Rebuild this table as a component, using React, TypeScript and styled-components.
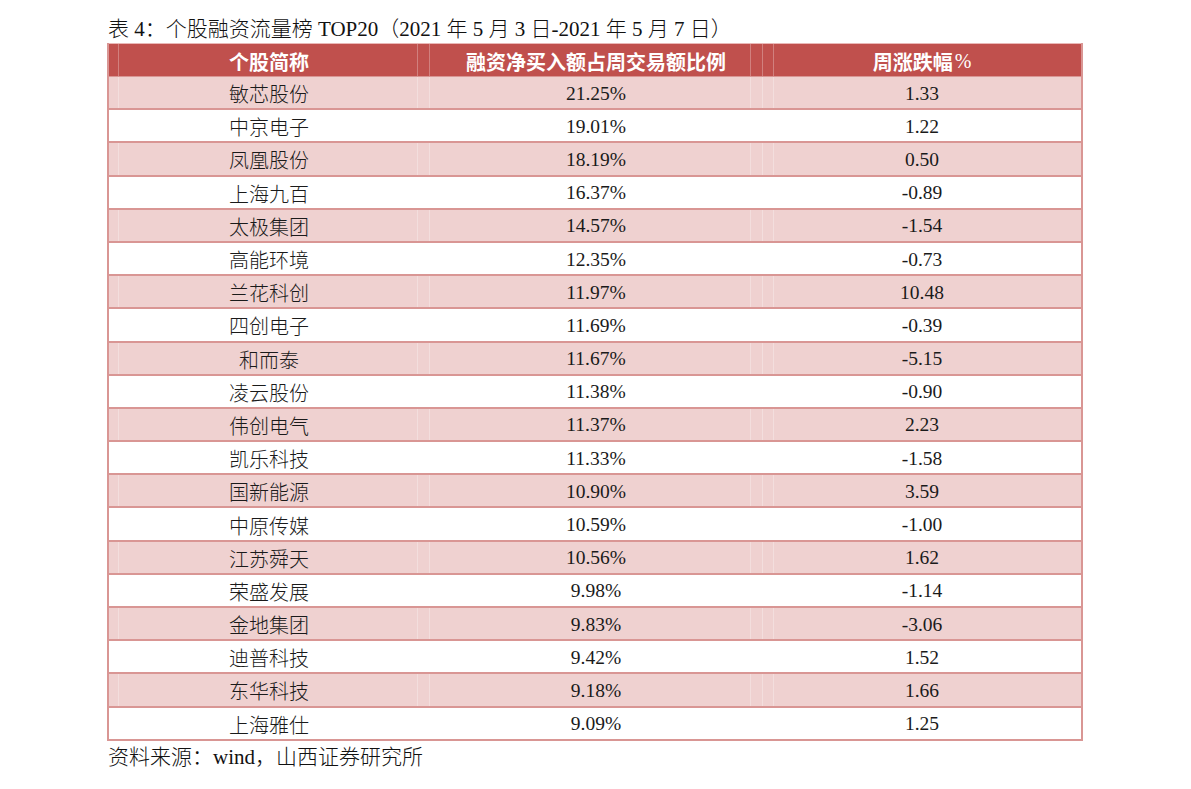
import React from "react";
import styled, { createGlobalStyle } from "styled-components";

const GlobalStyle = createGlobalStyle`
  html, body {
    margin: 0;
    padding: 0;
    background: #ffffff;
  }
  body {
    font-family: "Liberation Serif", "Noto Sans CJK SC", serif;
    color: #111111;
  }
`;

const Page = styled.div`
  display: flex;
  flex-direction: column;
  padding: 15px 0 0 107px;
  width: 976px;
`;

const Title = styled.div`
  height: 28px;
  line-height: 28px;
  font-size: 21px;
  font-weight: 300;
  padding-left: 1px;
  white-space: nowrap;
  color: #111;
`;

const Table = styled.div`
  display: flex;
  flex-direction: column;
  width: 976px;
  border-left: 2px solid #d99694;
  border-right: 2px solid #d99694;
  box-sizing: border-box;
`;

const Row = styled.div<{ $variant: "head" | "pink" | "white" }>`
  display: grid;
  grid-template-columns: 320px 333px 1fr;
  box-sizing: border-box;
  height: ${(p) => (p.$variant === "head" ? "34px" : "33.2px")};
  background: ${(p) =>
    p.$variant === "head" ? "#c0504d" : p.$variant === "pink" ? "#efd1d0" : "#ffffff"};
  border-top: ${(p) => (p.$variant === "head" ? "1px solid #eab8b7" : "none")};
  border-bottom: ${(p) => (p.$variant === "head" ? "1px solid #d99694" : "2px solid #d99694")};
  color: ${(p) => (p.$variant === "head" ? "#ffffff" : "#1a1a1a")};
  font-weight: ${(p) => (p.$variant === "head" ? 700 : 300)};
`;

const Cell = styled.div<{ $lineLeft?: number; $lineRight?: number; $divider?: boolean }>`
  position: relative;
  display: flex;
  align-items: center;
  justify-content: center;
  padding-top: 2px;
  box-sizing: border-box;
  font-size: 20px;
  white-space: nowrap;
  border-left: ${(p) => (p.$divider ? "1px solid rgba(255,255,255,0.28)" : "none")};
  &::before {
    content: "";
    display: ${(p) => (p.$lineLeft !== undefined ? "block" : "none")};
    position: absolute;
    top: 0;
    bottom: 0;
    left: ${(p) => p.$lineLeft ?? 0}px;
    width: 1px;
    background: rgba(255, 255, 255, 0.28);
  }
  &::after {
    content: "";
    display: ${(p) => (p.$lineRight !== undefined ? "block" : "none")};
    position: absolute;
    top: 0;
    bottom: 0;
    right: ${(p) => p.$lineRight ?? 0}px;
    width: 1px;
    background: rgba(255, 255, 255, 0.28);
  }
`;

const Num = styled.span`
  font-family: "Liberation Serif", "Times New Roman", serif;
  font-size: 19.5px;
  font-weight: 400;
`;

const Pct = styled.span`
  font-family: "Liberation Serif", "Times New Roman", serif;
  font-weight: 400;
  font-size: 20px;
  margin-left: 2px;
`;

const Footer = styled.div`
  height: 32px;
  line-height: 32px;
  font-size: 21px;
  font-weight: 300;
  padding-left: 1px;
  white-space: nowrap;
  color: #111;
`;

const rows: [string, string, string][] = [
  ["敏芯股份", "21.25%", "1.33"],
  ["中京电子", "19.01%", "1.22"],
  ["凤凰股份", "18.19%", "0.50"],
  ["上海九百", "16.37%", "-0.89"],
  ["太极集团", "14.57%", "-1.54"],
  ["高能环境", "12.35%", "-0.73"],
  ["兰花科创", "11.97%", "10.48"],
  ["四创电子", "11.69%", "-0.39"],
  ["和而泰", "11.67%", "-5.15"],
  ["凌云股份", "11.38%", "-0.90"],
  ["伟创电气", "11.37%", "2.23"],
  ["凯乐科技", "11.33%", "-1.58"],
  ["国新能源", "10.90%", "3.59"],
  ["中原传媒", "10.59%", "-1.00"],
  ["江苏舜天", "10.56%", "1.62"],
  ["荣盛发展", "9.98%", "-1.14"],
  ["金地集团", "9.83%", "-3.06"],
  ["迪普科技", "9.42%", "1.52"],
  ["东华科技", "9.18%", "1.66"],
  ["上海雅仕", "9.09%", "1.25"],
];

export default function App() {
  return (
    <>
      <GlobalStyle />
      <Page>
        <Title>表 4：个股融资流量榜 TOP20（2021 年 5 月 3 日-2021 年 5 月 7 日）</Title>
        <Table>
          <Row $variant="head">
            <Cell $lineLeft={9} $lineRight={11}>个股简称</Cell>
            <Cell $divider $lineRight={11}>融资净买入额占周交易额比例</Cell>
            <Cell $divider $lineLeft={10}>
              周涨跌幅<Pct>%</Pct>
            </Cell>
          </Row>
          {rows.map(([name, ratio, change], i) => (
            <Row key={name} $variant={i % 2 === 0 ? "pink" : "white"}>
              <Cell $lineLeft={9} $lineRight={11}>{name}</Cell>
              <Cell $divider $lineRight={11}>
                <Num>{ratio}</Num>
              </Cell>
              <Cell $divider $lineLeft={10}>
                <Num>{change}</Num>
              </Cell>
            </Row>
          ))}
        </Table>
        <Footer>资料来源：wind，山西证券研究所</Footer>
      </Page>
    </>
  );
}
